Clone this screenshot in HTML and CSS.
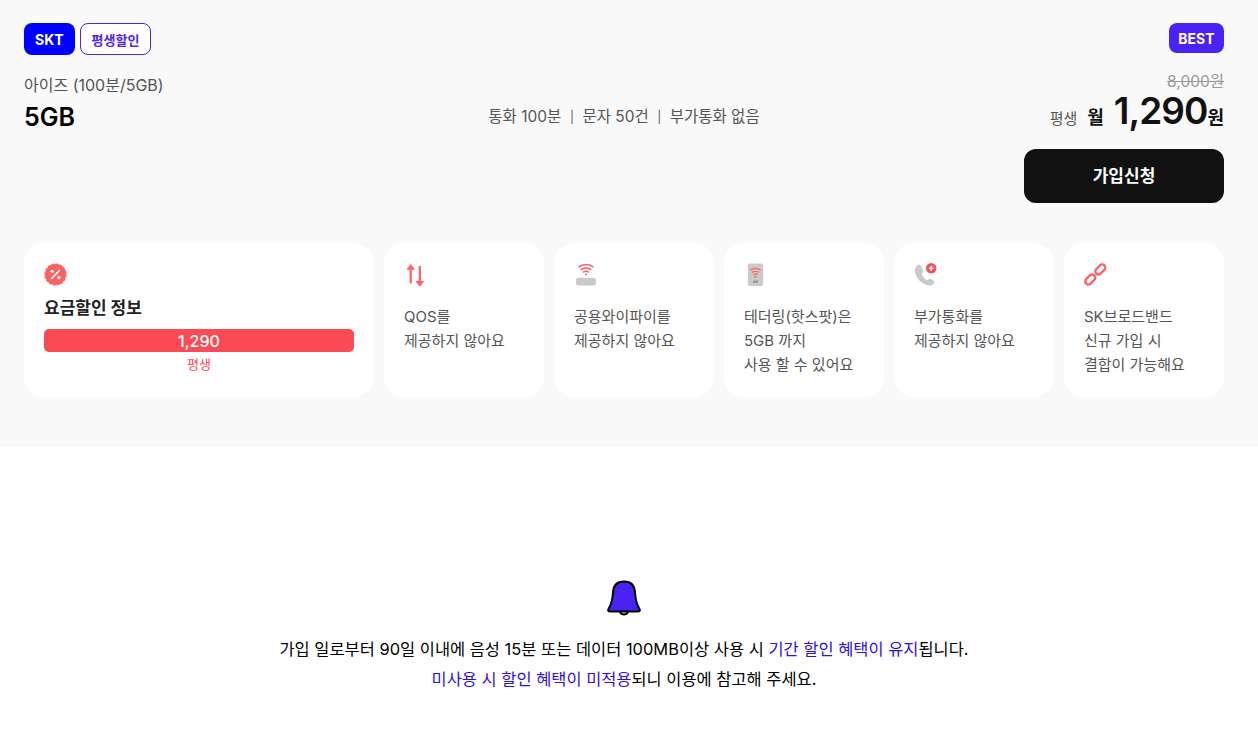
FILE: index.html
```html
<!DOCTYPE html>
<html lang="ko">
<head>
    <meta charset="UTF-8">
    <title>요금제 상세</title>
    <link rel="stylesheet" href="styles.css">
</head>
<body>
    <section class="plan">
        <div class="plan-top">
            <div class="tags">
                <span class="tag tag-carrier">SKT</span>
                <span class="tag tag-outline">평생할인</span>
            </div>
            <span class="tag-best">BEST</span>
        </div>

        <div class="plan-main">
            <div class="plan-name">
                <p class="plan-title">아이즈 (100분/5GB)</p>
                <p class="plan-data">5GB</p>
            </div>
            <p class="plan-spec">통화 100분<span class="sep">|</span>문자 50건<span class="sep">|</span>부가통화 없음</p>
            <div class="plan-price">
                <p class="price-old">8,000원</p>
                <p class="price-now">
                    <span class="price-term">평생</span>
                    <span class="price-month">월</span>
                    <span class="price-num">1,290</span><span class="price-won">원</span>
                </p>
                <button class="join-button">가입신청</button>
            </div>
        </div>

        <div class="cards">
            <div class="card card-wide">
                <svg class="icon" viewBox="0 0 24 24">
                    <circle cx="12" cy="12" r="11" fill="#f9635f" stroke="#f9635f" stroke-width="1.200" stroke-dasharray="3 1.300"/>
                    <circle cx="8.500" cy="8.700" r="1.700" fill="#fff"/>
                    <circle cx="15.500" cy="15.300" r="1.700" fill="#fff"/>
                    <path d="M16 7.800L8 16.200" stroke="#fff" stroke-width="1.700" stroke-linecap="round"/>
                </svg>
                <h3 class="card-title">요금할인 정보</h3>
                <div class="bar">1,290</div>
                <p class="bar-label">평생</p>
            </div>

            <div class="card">
                <svg class="icon" viewBox="0 0 24 24" fill="none" stroke="#fb6468" stroke-width="2.400" stroke-linejoin="round">
                    <path d="M7 21V5M16.500 3v17"/>
                    <path d="M3.500 6.500L7 2l3.500 4.500z" fill="#fb6468" stroke-width="1.200"/>
                    <path d="M13 19.500l3.500 4.500 3.500-4.500z" fill="#fb6468" stroke-width="1.200"/>
                </svg>
                <p class="card-text">QOS를<br>제공하지 않아요</p>
            </div>

            <div class="card">
                <svg class="icon" viewBox="0 0 24 24" fill="none">
                    <rect x="2" y="15.500" width="21" height="8" rx="3" fill="#c9c9c9"/>
                    <g stroke="#fb6468" stroke-width="1.500">
                        <path d="M4.500 4.500c4.500-4 11.500-4 16 0"/>
                        <path d="M7 7.200c3-2.600 8-2.600 11 0"/>
                        <path d="M9.500 9.800c1.700-1.400 4.300-1.400 6 0"/>
                    </g>
                    <circle cx="12.500" cy="12" r="1.100" fill="#fb6468"/>
                </svg>
                <p class="card-text">공용와이파이를<br>제공하지 않아요</p>
            </div>

            <div class="card">
                <svg class="icon" viewBox="0 0 24 24" fill="none">
                    <rect x="4" y="0.500" width="16" height="23.500" rx="2" fill="#c9c9c9"/>
                    <g stroke="#fb6468" stroke-width="1.300">
                        <path d="M6.500 7.500c3-2.600 8-2.600 11 0"/>
                        <path d="M8.300 10c2-1.600 5.400-1.600 7.400 0"/>
                        <path d="M10 12.300c1.100-.9 2.900-.9 4 0"/>
                    </g>
                    <circle cx="12" cy="14.500" r="1" fill="#fb6468"/>
                    <rect x="9.500" y="18.500" width="5" height="2" fill="#8c8c8c"/>
                </svg>
                <p class="card-text">테더링(핫스팟)은<br>5GB 까지<br>사용 할 수 있어요</p>
            </div>

            <div class="card">
                <svg class="icon" viewBox="0 0 24 24" fill="none">
                    <path d="M4.500 2C1.500 3.500.5 6 1 9.500c1 6 6 11.500 12 13.500 3 .9 6 .6 7.500-1.500 1-1.300.5-2.500-.5-3.200l-2.700-1.600c-1-.6-1.800-.4-2.500.3l-1 1c-2.600-1.200-4.800-3.700-5.800-6.500l1-1.200c.7-.8.7-1.600.3-2.500L7.300 2.800c-.5-1-1.800-1.300-2.800-.8z" fill="#c9c9c9"/>
                    <circle cx="18" cy="5.500" r="5.500" fill="#f9525c"/>
                    <path d="M18 3v5M15.500 5.500h5" stroke="#fff" stroke-width="1.600"/>
                </svg>
                <p class="card-text">부가통화를<br>제공하지 않아요</p>
            </div>

            <div class="card">
                <svg class="icon" viewBox="0 0 24 24" fill="none" stroke="#fb6468" stroke-width="2.500">
                    <rect x="0.500" y="14" width="12" height="6.500" rx="3.250" transform="rotate(-45 6.500 17.250)"/>
                    <rect x="11" y="3.500" width="12" height="6.500" rx="3.250" transform="rotate(-45 17 6.750)"/>
                </svg>
                <p class="card-text">SK브로드밴드<br>신규 가입 시<br>결합이 가능해요</p>
            </div>
        </div>
    </section>

    <section class="notice">
        <svg class="bell" viewBox="0 0 36 38">
            <path d="M14 32a4.500 4.500 0 0 0 8 0" fill="none" stroke="#000" stroke-width="2"/>
            <path d="M18 1.500C11 1.500 7.500 6 7 12c-.4 6-.5 11-4.500 17-.8 1.200-.6 2.500 1.500 2.500h28c2.100 0 2.300-1.300 1.500-2.500-4-6-4.100-11-4.500-17C28.500 6 25 1.500 18 1.500z" fill="#4b22f4" stroke="#000" stroke-width="2"/>
        </svg>
        <p>가입 일로부터 90일 이내에 음성 15분 또는 데이터 100MB이상 사용 시 <span class="point">기간 할인 혜택이 유지</span>됩니다.</p>
        <p><span class="point">미사용 시 할인 혜택이 미적용</span>되니 이용에 참고해 주세요.</p>
    </section>
</body>
</html>
```

FILE: styles.css
```css
* {
    box-sizing: border-box;
}
body {
    margin: 0;
    font-family: "Inter", "Noto Sans CJK KR", sans-serif;
    color: #000;
    background-color: #fff;
}
p, h3 {
    margin: 0;
}
.plan {
    height: 447px;
    padding: 23px 34px 0 24px;
    background-color: #f9f9f9;
}
.plan-top {
    display: flex;
    justify-content: space-between;
    align-items: flex-start;
}
.tags {
    display: flex;
    gap: 5px;
}
.tag {
    display: flex;
    align-items: center;
    height: 32px;
    border-radius: 8px;
    font-size: 14px;
    font-weight: 700;
}
.tag-carrier {
    padding: 0 11px;
    background-color: #0000ff;
    color: #fff;
}
.tag-outline {
    padding: 0 11px;
    border: 1px solid #4f22f0;
    background-color: #fff;
    color: #4f22f0;
    font-size: 13px;
}
.tag-best {
    display: flex;
    align-items: center;
    height: 30px;
    padding: 0 9.500px;
    border-radius: 8px;
    background-color: #4b22f4;
    color: #fff;
    font-size: 14px;
    font-weight: 700;
}
.plan-main {
    display: grid;
    grid-template-columns: 1fr auto 1fr;
    margin-top: 16px;
}
.plan-name {
    padding-top: 3px;
}
.plan-title {
    font-size: 16px;
    line-height: 22px;
    color: #555;
}
.plan-data {
    margin-top: 5px;
    font-size: 25px;
    line-height: 32px;
    font-weight: 600;
}
.plan-spec {
    padding-top: 35px;
    font-size: 15.500px;
    line-height: 22px;
    color: #555;
}
.sep {
    margin: 0 8.500px;
    font-size: 12px;
    vertical-align: 1px;
}
.plan-price {
    display: flex;
    flex-direction: column;
    align-items: flex-end;
    padding-top: 1px;
}
.price-old {
    font-size: 15.500px;
    line-height: 20px;
    color: #999;
    text-decoration: line-through;
}
.price-now {
    display: flex;
    align-items: baseline;
    height: 38px;
    line-height: 38px;
}
.price-term {
    margin-right: 10px;
    font-size: 15px;
    color: #555;
}
.price-month {
    margin-right: 10px;
    font-size: 18px;
    font-weight: 700;
    color: #111;
}
.price-num {
    font-size: 37px;
    font-weight: 600;
    letter-spacing: -1px;
    color: #111;
}
.price-won {
    font-size: 18px;
    font-weight: 700;
    color: #111;
}
.join-button {
    width: 200px;
    height: 54px;
    margin-top: 19px;
    padding-bottom: 4px;
    border: none;
    border-radius: 12px;
    background-color: #111;
    color: #fff;
    font-family: inherit;
    font-size: 17px;
    font-weight: 700;
}
.cards {
    display: flex;
    gap: 10px;
    margin-top: 40px;
}
.card {
    width: 160px;
    height: 154px;
    padding: 20px;
    border-radius: 20px;
    background-color: #fff;
}
.card-wide {
    width: 350px;
}
.icon {
    display: block;
    width: 23px;
    height: 23px;
}
.card-title {
    margin-top: 10px;
    font-size: 17px;
    line-height: 24px;
    font-weight: 700;
    color: #222;
}
.bar {
    height: 23px;
    margin-top: 9px;
    border-radius: 5px;
    background-color: #fb4a55;
    color: #fff;
    font-size: 16px;
    font-weight: 500;
    line-height: 25px;
    text-align: center;
}
.bar-label {
    margin-top: 3px;
    font-size: 13px;
    line-height: 18px;
    text-align: center;
    color: #fb4a55;
}
.card-text {
    margin-top: 19px;
    font-size: 15px;
    line-height: 24px;
    color: #555;
}
.notice {
    padding: 133px 10px 0 0;
    text-align: center;
    font-size: 16.450px;
    line-height: 30px;
}
.bell {
    display: block;
    width: 36px;
    height: 38px;
    margin: 0 auto 16px;
}
.point {
    color: #2f0fe8;
}
```
